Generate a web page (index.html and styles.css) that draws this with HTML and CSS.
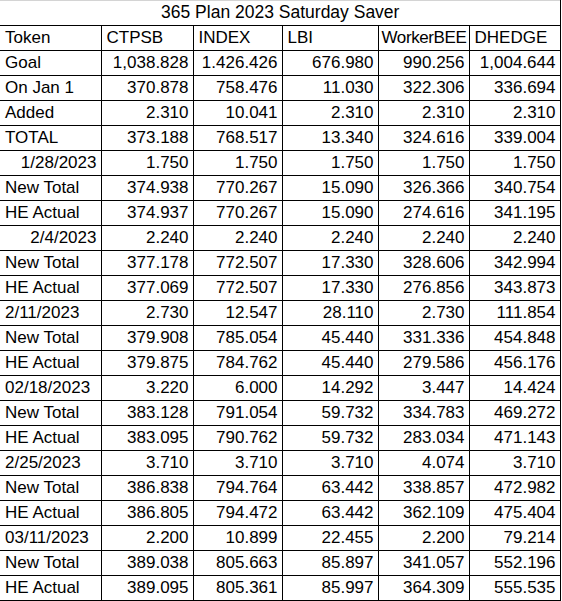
FILE: index.html
```html
<!DOCTYPE html>
<html>
<head>
<meta charset="utf-8">
<link rel="stylesheet" href="styles.css">
</head>
<body>
<table class="sheet">
  <colgroup>
    <col class="c1"><col class="c2"><col class="c3"><col class="c4"><col class="c5"><col class="c6">
  </colgroup>
  <tr class="title-row"><td class="title" colspan="6">365 Plan 2023 Saturday Saver</td></tr>
  <tr><td>Token</td><td>CTPSB</td><td>INDEX</td><td>LBI</td><td class="tight">WorkerBEE</td><td>DHEDGE</td></tr>
  <tr><td>Goal</td><td class="num">1,038.828</td><td class="num">1.426.426</td><td class="num">676.980</td><td class="num">990.256</td><td class="num">1,004.644</td></tr>
  <tr><td>On Jan 1</td><td class="num">370.878</td><td class="num">758.476</td><td class="num">11.030</td><td class="num">322.306</td><td class="num">336.694</td></tr>
  <tr><td>Added</td><td class="num">2.310</td><td class="num">10.041</td><td class="num">2.310</td><td class="num">2.310</td><td class="num">2.310</td></tr>
  <tr><td>TOTAL</td><td class="num">373.188</td><td class="num">768.517</td><td class="num">13.340</td><td class="num">324.616</td><td class="num">339.004</td></tr>
  <tr><td class="num">1/28/2023</td><td class="num">1.750</td><td class="num">1.750</td><td class="num">1.750</td><td class="num">1.750</td><td class="num">1.750</td></tr>
  <tr><td>New Total</td><td class="num">374.938</td><td class="num">770.267</td><td class="num">15.090</td><td class="num">326.366</td><td class="num">340.754</td></tr>
  <tr><td>HE Actual</td><td class="num">374.937</td><td class="num">770.267</td><td class="num">15.090</td><td class="num">274.616</td><td class="num">341.195</td></tr>
  <tr><td class="num">2/4/2023</td><td class="num">2.240</td><td class="num">2.240</td><td class="num">2.240</td><td class="num">2.240</td><td class="num">2.240</td></tr>
  <tr><td>New Total</td><td class="num">377.178</td><td class="num">772.507</td><td class="num">17.330</td><td class="num">328.606</td><td class="num">342.994</td></tr>
  <tr><td>HE Actual</td><td class="num">377.069</td><td class="num">772.507</td><td class="num">17.330</td><td class="num">276.856</td><td class="num">343.873</td></tr>
  <tr><td>2/11/2023</td><td class="num">2.730</td><td class="num">12.547</td><td class="num">28.110</td><td class="num">2.730</td><td class="num">111.854</td></tr>
  <tr><td>New Total</td><td class="num">379.908</td><td class="num">785.054</td><td class="num">45.440</td><td class="num">331.336</td><td class="num">454.848</td></tr>
  <tr><td>HE Actual</td><td class="num">379.875</td><td class="num">784.762</td><td class="num">45.440</td><td class="num">279.586</td><td class="num">456.176</td></tr>
  <tr><td>02/18/2023</td><td class="num">3.220</td><td class="num">6.000</td><td class="num">14.292</td><td class="num">3.447</td><td class="num">14.424</td></tr>
  <tr><td>New Total</td><td class="num">383.128</td><td class="num">791.054</td><td class="num">59.732</td><td class="num">334.783</td><td class="num">469.272</td></tr>
  <tr><td>HE Actual</td><td class="num">383.095</td><td class="num">790.762</td><td class="num">59.732</td><td class="num">283.034</td><td class="num">471.143</td></tr>
  <tr><td>2/25/2023</td><td class="num">3.710</td><td class="num">3.710</td><td class="num">3.710</td><td class="num">4.074</td><td class="num">3.710</td></tr>
  <tr><td>New Total</td><td class="num">386.838</td><td class="num">794.764</td><td class="num">63.442</td><td class="num">338.857</td><td class="num">472.982</td></tr>
  <tr><td>HE Actual</td><td class="num">386.805</td><td class="num">794.472</td><td class="num">63.442</td><td class="num">362.109</td><td class="num">475.404</td></tr>
  <tr><td>03/11/2023</td><td class="num">2.200</td><td class="num">10.899</td><td class="num">22.455</td><td class="num">2.200</td><td class="num">79.214</td></tr>
  <tr><td>New Total</td><td class="num">389.038</td><td class="num">805.663</td><td class="num">85.897</td><td class="num">341.057</td><td class="num">552.196</td></tr>
  <tr><td>HE Actual</td><td class="num">389.095</td><td class="num">805.361</td><td class="num">85.997</td><td class="num">364.309</td><td class="num">555.535</td></tr>
</table>
</body>
</html>
```
FILE: styles.css
```css
html, body {
  margin: 0;
  padding: 0;
  background: #ffffff;
}
.sheet {
  border-collapse: collapse;
  table-layout: fixed;
  width: 560px;
  font-family: "Liberation Sans", Arial, sans-serif;
  font-size: 17px;
  color: #000;
  border-top: 1px solid #d4d4d4;
}
.c1 { width: 101px; }
.c2 { width: 92px; }
.c3 { width: 89px; }
.c4 { width: 96px; }
.c5 { width: 91px; }
.c6 { width: 91px; }
.sheet td {
  height: 25px;
  box-sizing: border-box;
  padding: 0 4px 3px 5px;
  border: 1px solid #000;
  vertical-align: bottom;
  line-height: 19px;
  white-space: nowrap;
  overflow: hidden;
}
.sheet tr td:first-child {
  border-left: none;
}
.sheet .title {
  text-align: center;
  font-size: 17.5px;
  border-top: 1px solid #d4d4d4;
}
.sheet .num {
  text-align: right;
}
.sheet .tight {
  padding-left: 3px;
  padding-right: 0;
  letter-spacing: -0.4px;
}
```
